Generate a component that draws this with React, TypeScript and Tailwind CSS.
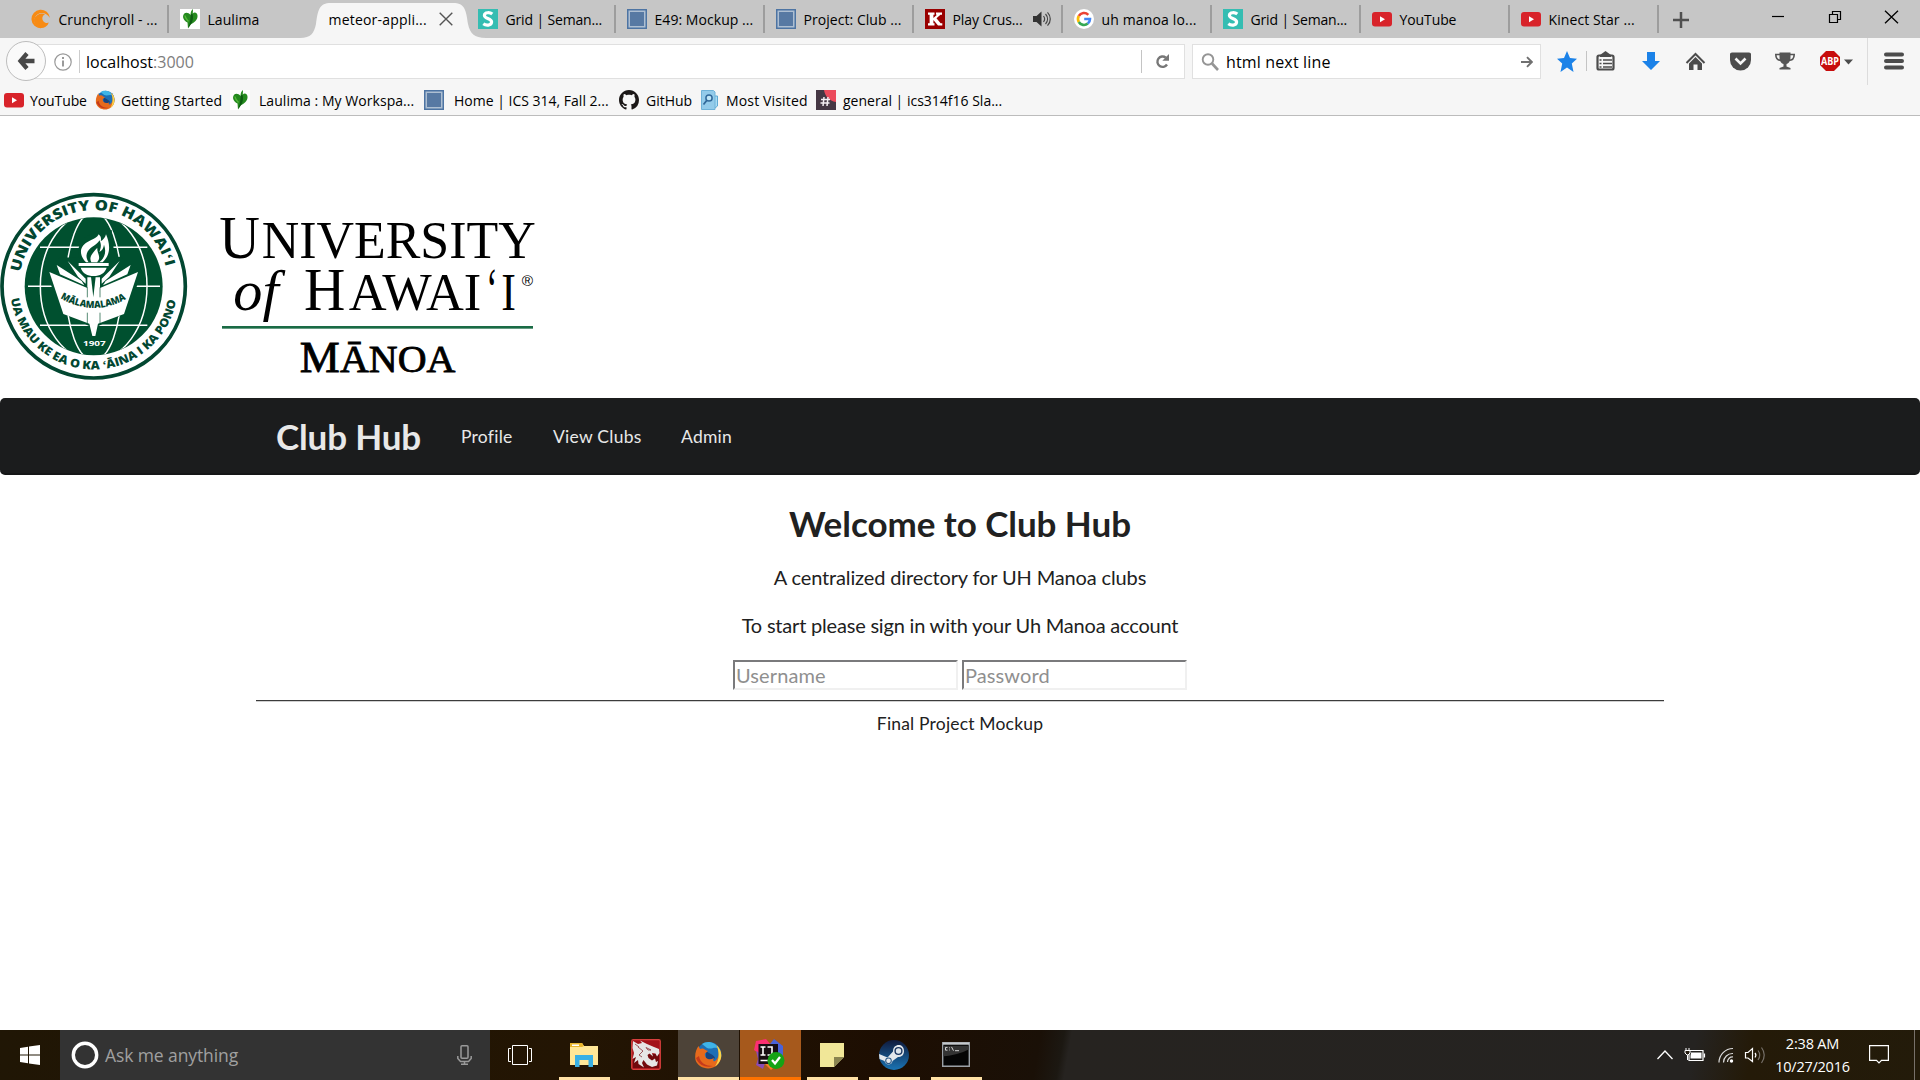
import React from "react";

const UI = "font-['Open_Sans','Noto_Sans',sans-serif]";

function Crunchy() {
  return (
    <svg width="20" height="20" viewBox="0 0 20 20">
      <path d="M19 9A9.300 9.300 0 1 0 10 19.300C4 17 2 12.500 4 8.500C6.500 3 14.500 2 19 9Z" fill="#f78b14" />
      <path d="M14 5.200A7.300 7.300 0 1 0 17.800 13.500A3.900 3.900 0 1 1 14 5.200Z" fill="#f78b14" />
      <path d="M10 19.300C3 17.500 1.500 11 4.500 7.500L8 14Z" fill="#f78b14" />
    </svg>
  );
}
function Leaf() {
  return (
    <svg width="20" height="20" viewBox="0 0 20 20">
      <rect width="20" height="20" fill="#fff" />
      <path d="M10.500 6C8 2.500 3 3 3 8C3.500 11 5.500 12.500 7.500 13.500L8 19.500L10.500 15.500C14 14 18 10.500 17.500 6.500C17 3 14 3 12.800 4.500L13 0C11.500 1 10.500 3 10.500 6Z" fill="#258a1f" />
      <path d="M11 5C10 9 11 12 8 19C12 15 14 10 12.500 5Z" fill="#0d5c12" />
      <path d="M5 6.500C5 9 7 10.500 8.500 12.500" stroke="#55b83a" strokeWidth="1.400" fill="none" />
    </svg>
  );
}
function SemanticIcon() {
  return (
    <svg width="20" height="20" viewBox="0 0 20 20">
      <rect width="20" height="20" fill="#35bdb2" />
      <path d="M14.3 5.1C12 3.2 6.7 3 6.4 6.3C6.2 9.8 13.6 9 13.6 13C13.4 16.8 8 16.8 5.3 14.8" stroke="#fff" strokeWidth="3.2" fill="none" />
    </svg>
  );
}
function BlueSquare() {
  return (
    <svg width="20" height="20" viewBox="0 0 20 20">
      <rect x=".75" y=".75" width="18.5" height="18.5" fill="#aebfd2" stroke="#4d74a3" strokeWidth="1.5" />
      <rect x="3" y="3" width="14" height="14" fill="#5779a3" />
    </svg>
  );
}
function KIcon() {
  return (
    <svg width="20" height="20" viewBox="0 0 20 20">
      <rect width="20" height="20" fill="#990000" />
      <path d="M3 3.5H9.5V5.8H8.4V9L12 5.8H11V3.5H17V5.8H15.4L11.5 9.3L15.6 14.3H17.3V16.6H13L8.4 11V14.3H9.5V16.6H3V14.3H4.6V5.8H3Z" fill="#fff" />
    </svg>
  );
}
function GoogleIcon() {
  return (
    <svg width="20" height="20" viewBox="0 0 20 20">
      <circle cx="10" cy="10" r="10" fill="#fff" />
      <g fill="none" strokeWidth="2.6">
        <path d="M14.3 5.8A6 6 0 0 0 4.8 7" stroke="#ea4335" />
        <path d="M4.8 7A6 6 0 0 0 4.8 13" stroke="#fbbc05" />
        <path d="M4.8 13A6 6 0 0 0 13.8 14.6" stroke="#34a853" />
        <path d="M13.8 14.6A6 6 0 0 0 16 10H10.2" stroke="#4285f4" />
      </g>
    </svg>
  );
}
function YouTubeIcon() {
  return (
    <svg width="20" height="20" viewBox="0 0 20 20">
      <rect y="3" width="20" height="14.6" rx="3" fill="#d8232a" />
      <path d="M8 7.2L13 10.2L8 13.2Z" fill="#fff" />
    </svg>
  );
}
function Firefox({ w, h }: { w: number; h: number }) {
  return (
    <svg width={w} height={h} viewBox="0 0 28 28" preserveAspectRatio="none">
      <circle cx="15" cy="13.5" r="12.5" fill="#1d6fb5" />
      <path d="M8 3C13 -1 22 1 25 8C20 5 18 9 13 7Z" fill="#3fb4e8" />
      <path d="M12 9C14 13 20 13 21 17C19 20 14 20 12 18Z" fill="#17447f" />
      <path d="M22 4C29 9 29 20 22 25C15 30 4 27 1.500 19C.5 13 2 9 4.500 5L6 8C8 7 10 7.500 11.500 9L14 10L11 12.500C10 17 15 20 20 17C17 23 24 20 24.500 14C25 10 24 7 22 4Z" fill="#e66a1c" />
      <path d="M22.500 4C30 11 28 21 21 25.500C25 20 26 12 22.500 4Z" fill="#f9d548" />
      <path d="M2 17C5 25 13 27 19 25C12 25 6 22 5 15Z" fill="#c53a1b" />
    </svg>
  );
}
function GitHubIcon() {
  return (
    <svg width="20" height="20" viewBox="0 0 16 16">
      <path fill="#1b1817" d="M8 0C3.58 0 0 3.58 0 8c0 3.54 2.29 6.53 5.47 7.59.4.07.55-.17.55-.38 0-.19-.01-.82-.01-1.49-2.01.37-2.53-.49-2.69-.94-.09-.23-.48-.94-.82-1.13-.28-.15-.68-.52-.01-.53.63-.01 1.08.58 1.23.82.72 1.21 1.87.87 2.33.66.07-.52.28-.87.51-1.07-1.78-.2-3.64-.89-3.64-3.95 0-.87.31-1.59.82-2.15-.08-.2-.36-1.02.08-2.12 0 0 .67-.21 2.2.82.64-.18 1.32-.27 2-.27s1.36.09 2 .27c1.53-1.04 2.2-.82 2.2-.82.44 1.1.16 1.92.08 2.12.51.56.82 1.27.82 2.15 0 3.07-1.87 3.75-3.65 3.95.29.25.54.73.54 1.48 0 1.07-.01 1.93-.01 2.2 0 .21.15.46.55.38A8.01 8.01 0 0 0 16 8c0-4.42-3.58-8-8-8z" />
    </svg>
  );
}
function VisitedIcon() {
  return (
    <svg width="20" height="20" viewBox="0 0 20 20">
      <path d="M12 6H17.500V16L15 18H12Z" fill="#a9dcf5" stroke="#5fa9d3" />
      <path d="M1.500 .5H13.500L15 2V19.500H1.500Z" fill="#93cbea" stroke="#6fb2d8" />
      <circle cx="9" cy="8" r="3.100" fill="#bfe6f8" stroke="#31699a" strokeWidth="1.500" />
      <path d="M6.700 10.500L3.500 14.500" stroke="#31699a" strokeWidth="1.800" />
    </svg>
  );
}
function SlackIcon() {
  return (
    <svg width="20" height="20" viewBox="0 0 20 20">
      <rect width="20" height="20" fill="#453744" />
      <path d="M8 0H20V12C13 11 9 6 8 0Z" fill="#ec4a5c" />
      <path d="M8 7L7 16M12 7L11 16M5 9.500H14M4.500 13H13.500" stroke="#f4eef2" strokeWidth="1.500" />
    </svg>
  );
}

type TabData = { icon: React.ReactNode; label: string; active?: boolean; sound?: boolean; noSep?: boolean; track: string };

const tabs: TabData[] = [
  { icon: <Crunchy />, label: "Crunchyroll - ...", track: "tracking-[0.05px]" },
  { icon: <Leaf />, label: "Laulima", noSep: true, track: "tracking-[0.05px]" },
  { icon: null, label: "meteor-appli...", active: true, noSep: true, track: "tracking-[0.2px]" },
  { icon: <SemanticIcon />, label: "Grid | Seman...", track: "tracking-[-0.15px]" },
  { icon: <BlueSquare />, label: "E49: Mockup ...", track: "tracking-[0.05px]" },
  { icon: <BlueSquare />, label: "Project: Club ...", track: "tracking-[0.05px]" },
  { icon: <KIcon />, label: "Play Crus...", sound: true, track: "tracking-[-0.1px]" },
  { icon: <GoogleIcon />, label: "uh manoa lo...", track: "tracking-[0.15px]" },
  { icon: <SemanticIcon />, label: "Grid | Seman...", track: "tracking-[-0.15px]" },
  { icon: <YouTubeIcon />, label: "YouTube", track: "tracking-[-0.1px]" },
  { icon: <YouTubeIcon />, label: "Kinect Star ...", track: "tracking-[0.1px]" },
];

function Tab({ t }: { t: TabData }) {
  if (t.active) {
    return (
      <div className="relative flex h-[38px] w-[149px] items-center">
        <svg className="absolute -left-[18px] top-0" width="186" height="38" viewBox="0 0 186 38">
          <path d="M0 38C11 38 14 33 16 24C18 10 19 3 31 3H153C165 3 166 10 168 24C170 33 174 38 186 38Z" fill="#f6f6f6" />
        </svg>
        <span className={"relative ml-[11px] w-[99px] whitespace-nowrap text-[14px] " + t.track}>{t.label}</span>
        <svg className="relative ml-[11px]" width="14" height="14" viewBox="0 0 14 14">
          <path d="M.7.7L13.300 13.300M13.300.7L.7 13.300" stroke="#555" strokeWidth="1.400" />
        </svg>
      </div>
    );
  }
  return (
    <div className="flex h-[38px] w-[149px] shrink-0 items-center">
      <div className="ml-[11px] h-5 w-5">{t.icon}</div>
      <span className={"ml-2 whitespace-nowrap text-[14px] " + t.track}>{t.label}</span>
      <div className="ml-auto flex items-center">
        {t.sound && (
          <svg className="mr-[10px]" width="18" height="16" viewBox="0 0 18 16">
            <path d="M0 5H3.500L8.500 .5V15.500L3.500 11H0Z" fill="#333" />
            <path d="M10.500 5C12 7 12 9 10.500 11M12.500 3C15.200 6 15.200 10 12.500 13M14.500 1.300C18.200 5 18.200 11 14.500 14.700" stroke="#444" strokeWidth="1.200" fill="none" />
          </svg>
        )}
        {!t.noSep && <div className="h-7 w-[1.5px] bg-[#9d9d9d]" />}
      </div>
    </div>
  );
}

function TabStrip() {
  return (
    <div className="flex h-[38px] bg-[#c6c6c6] pl-[19.500px] text-black">
      {tabs.map((t, i) => (
        <Tab key={i} t={t} />
      ))}
      <svg className="ml-[14.500px] mt-3" width="16" height="16" viewBox="0 0 16 16">
        <path d="M8 0V16M0 8H16" stroke="#505050" strokeWidth="2.500" />
      </svg>
      <svg className="ml-[83px] mt-[10px]" width="128" height="14" viewBox="0 0 128 14">
        <path d="M0 6.500H12" stroke="#000" strokeWidth="1.200" />
        <path d="M57.500 4.500H65.500V12.500H57.500ZM60.500 4V1.500H68.500V9.500H66" stroke="#000" strokeWidth="1.200" fill="none" />
        <path d="M113 .7L126 13.300M126 .7L113 13.300" stroke="#000" strokeWidth="1.300" />
      </svg>
    </div>
  );
}

function NavBar() {
  return (
    <div className="relative flex h-[47px] items-center bg-[#f6f6f6]">
      <div className="ml-6 flex h-[35px] w-[1161px] items-center border border-[#e0e0e0] bg-white">
        <svg className="ml-[29px]" width="18" height="18" viewBox="0 0 18 18">
          <circle cx="9" cy="9" r="8.200" fill="none" stroke="#999" strokeWidth="1.200" />
          <path d="M9 7.500V13.500M9 4V6" stroke="#909090" strokeWidth="1.800" />
        </svg>
        <div className="ml-[7px] h-[23px] w-px bg-[#ccc]" />
        <span className="ml-[6px] text-[16px] tracking-[0] text-black">
          localhost<span className="text-[#7d7d7d]">:3000</span>
        </span>
        <div className="ml-auto h-[23px] w-px bg-[#c4c4c4]" />
        <svg className="ml-[13px] mr-[14px]" width="15" height="15" viewBox="0 0 15 15">
          <path d="M10.800 3.600A5.200 5.200 0 1 0 12 10.500" fill="none" stroke="#777" strokeWidth="2.400" />
          <path d="M14 0V6.800H7.300Z" fill="#777" />
        </svg>
      </div>
      <div className="absolute left-[6px] top-[3px] flex h-10 w-10 items-center justify-center rounded-full border border-[#bdbdbd] bg-[#fafafa]">
        <svg width="20" height="20" viewBox="0 0 20 20">
          <path d="M11 2.500L4.500 10L11 17.500M5 10H18.500" fill="none" stroke="#484848" strokeWidth="4.300" />
        </svg>
      </div>
      <div className="ml-[7px] flex h-[35px] w-[349px] items-center border border-[#e0e0e0] bg-white">
        <svg className="ml-2" width="18" height="18" viewBox="0 0 18 18">
          <circle cx="7" cy="6.500" r="5.300" fill="none" stroke="#959595" strokeWidth="1.900" />
          <path d="M11 10.500L17 17" stroke="#959595" strokeWidth="2.600" />
        </svg>
        <span className="ml-[7px] text-[16px] tracking-[0.15px] text-black">html next line</span>
        <svg className="ml-auto mr-[7px]" width="12" height="12" viewBox="0 0 12 12">
          <path d="M0 6H10.500M6 1.200L10.800 6L6 10.800" fill="none" stroke="#707070" strokeWidth="1.900" />
        </svg>
      </div>
      <svg className="ml-[15px]" width="364" height="47" viewBox="1556 38 364 47">
        <path d="M1567 51L1570 58L1577 58.800L1571.800 63.600L1573.500 72L1567 67.600L1560.500 72L1562.200 63.600L1557 58.800L1564 58Z" fill="#1b82e8" />
        <path d="M1586.500 51V71" stroke="#c4c4c4" />
        <rect x="1597.500" y="55.500" width="16" height="14" rx="1.500" fill="#f6f6f6" stroke="#4c4c4c" strokeWidth="2.200" />
        <path d="M1600 55L1605.500 51L1611 55V57H1600Z" fill="#4c4c4c" />
        <path d="M1599.500 60H1601.500M1603 60H1612M1599.500 63.500H1601.500M1603 63.500H1612M1599.500 67H1601.500M1603 67H1612" stroke="#4c4c4c" strokeWidth="1.500" />
        <path d="M1647 52H1655V61H1660L1651 70L1642 61H1647Z" fill="#1b82e8" />
        <path d="M1686.500 63L1695.500 54L1704.500 63" fill="none" stroke="#4c4c4c" strokeWidth="2" />
        <path d="M1689 63.500L1695.500 57L1702 63.500V70H1697.500V64.500H1693.500V70H1689Z" fill="#4c4c4c" />
        <path d="M1730 54Q1730 52.500 1732 52.500H1749Q1751 52.500 1751 54V60A10.500 10.500 0 0 1 1730 60Z" fill="#4c4c4c" />
        <path d="M1735.500 58.500L1740.500 63.500L1745.500 58.500" fill="none" stroke="#f6f6f6" strokeWidth="2.600" />
        <path d="M1779.500 52.500H1790.500V57C1790.500 62 1788 63.500 1786.500 64V66.500L1790.500 68V69.500H1779.500V68L1783.500 66.500V64C1782 63.500 1779.500 62 1779.500 57Z" fill="#555" />
        <path d="M1780 54.500H1775.800C1775.800 58.500 1778 60.500 1781.500 60.500M1790 54.500H1794.200C1794.200 58.500 1792 60.500 1788.500 60.500" fill="none" stroke="#555" strokeWidth="1.600" />
        <path d="M1826 51H1834L1840 57V65L1834 71H1826L1820 65V57Z" fill="#c70d0d" />
        <text x="1821" y="65" fontFamily="Open Sans" fontWeight="700" fontSize="11" textLength="18" lengthAdjust="spacingAndGlyphs" fill="#fff">ABP</text>
        <path d="M1844 59.500H1853L1848.500 64.500Z" fill="#4c4c4c" />
        <path d="M1867.500 38V85" stroke="#dcdcdc" />
        <path d="M1886 54.500H1902M1886 61H1902M1886 67.500H1902" stroke="#4c4c4c" strokeWidth="4" strokeLinecap="round" />
      </svg>
    </div>
  );
}

function Bookmark({ icon, label, box, text }: { icon: React.ReactNode; label: string; box: string; text: string }) {
  return (
    <div className={"flex shrink-0 items-center " + box}>
      <div className="h-5 w-5 shrink-0">{icon}</div>
      <span className={"whitespace-nowrap text-[14px] text-black " + text}>{label}</span>
    </div>
  );
}

function Bookmarks() {
  return (
    <div className="flex h-[31px] items-center border-b border-[#bcbcbc] bg-[#f6f6f6] pl-1">
      <Bookmark icon={<YouTubeIcon />} label="YouTube" box="w-[91px]" text="ml-[6px] tracking-[-0.1px]" />
      <Bookmark icon={<Firefox w={20} h={20} />} label="Getting Started" box="w-[135px]" text="ml-[6px] tracking-[0.15px]" />
      <Bookmark icon={<Leaf />} label="Laulima : My Workspa..." box="w-[194px]" text="ml-[9px] tracking-[0.05px]" />
      <Bookmark icon={<BlueSquare />} label="Home | ICS 314, Fall 2..." box="w-[195px]" text="ml-[10px] tracking-[0]" />
      <Bookmark icon={<GitHubIcon />} label="GitHub" box="w-[81px]" text="ml-[7px] tracking-[0]" />
      <Bookmark icon={<VisitedIcon />} label="Most Visited" box="w-[116px]" text="ml-[6px] tracking-[0.15px]" />
      <Bookmark icon={<SlackIcon />} label="general | ics314f16 Sla..." box="w-[200px]" text="ml-[7px] tracking-[0]" />
    </div>
  );
}

function UniversityLogo() {
  return (
    <svg width="540" height="210" viewBox="0 0 1620 630" className="block">
      <defs>
        <path id="arcTop" d="M61 277A223 223 0 0 1 501 277" />
        <path id="arcBottom" d="M33 356A251 251 0 0 0 529 356" />
        <path id="arcBook" d="M181 354Q282 414 384 354" />
        <clipPath id="globe">
          <circle cx="281" cy="319" r="206" />
        </clipPath>
      </defs>
      <circle cx="281" cy="319" r="275" fill="#fff" stroke="#024731" strokeWidth="11" />
      <circle cx="281" cy="319" r="207" fill="#00502f" />
      <g clipPath="url(#globe)" fill="none" stroke="#fff" strokeWidth="4.500">
        <ellipse cx="281" cy="319" rx="160" ry="222" />
        <ellipse cx="281" cy="319" rx="83" ry="222" />
        <path d="M120 202H442M84 319H480M120 436H442" />
      </g>
      <path d="M281 235L180 232L140 275L180 395L281 445L385 395L425 275L360 230Z" fill="#00502f" />
      <path d="M238 236C225 195 250 170 290 155L335 150L345 245Z" fill="#00502f" />
      <path d="M148 276L262 324V292H300V324L414 276L372 402L294 431L286 468H277L268 431L190 402Z" fill="#fff" />
      <path d="M170 255L245 303L253 316L180 283ZM203 243L257 296V311L234 290ZM392 255L317 303L309 316L382 283ZM359 243L305 296V311L328 290Z" fill="#fff" />
      <path d="M273 290L280 352L287 290Z" fill="#00502f" />
      <path d="M262 322V352M300 322V352M262 398V430M300 398V430" stroke="#00502f" strokeWidth="2" />
      <path d="M236 249H326V258H236ZM242 263H320C314 280 300 288 281 288C262 288 248 280 242 263Z" fill="#fff" />
      <path d="M258 247C232 220 242 194 268 183C284 176 292 172 296 163C304 170 304 177 302 184C310 179 316 173 318 163C330 190 334 222 308 247Z" fill="#fff" />
      <path d="M266 247C254 230 260 214 272 204C286 194 296 188 298 181C306 194 302 206 298 216C306 212 311 204 312 194C320 216 314 234 298 247Z" fill="#00502f" />
      <path d="M274 247C266 232 276 220 292 203C290 220 306 231 291 247Z" fill="#fff" />
      <g fontFamily="Open Sans" fontWeight="800" fill="#024731">
        <text fontSize="43">
          <textPath href="#arcTop" textLength="610" lengthAdjust="spacingAndGlyphs">UNIVERSITY OF HAWAIʻI</textPath>
        </text>
        <text fontSize="35">
          <textPath href="#arcBottom" textLength="705" lengthAdjust="spacingAndGlyphs">UA MAU KE EA O KA ʻĀINA I KA PONO</textPath>
        </text>
        <text fontSize="29">
          <textPath href="#arcBook" textLength="208" lengthAdjust="spacingAndGlyphs">MĀLAMALAMA</textPath>
        </text>
        <text x="249" y="497" fontSize="22" fontWeight="700" fill="#fff" textLength="68" lengthAdjust="spacingAndGlyphs">1907</text>
      </g>
      <g fontFamily="Liberation Serif" fill="#000">
        <text x="658" y="234" fontSize="182" textLength="122" lengthAdjust="spacingAndGlyphs">U</text>
        <text x="785" y="234" fontSize="157" textLength="822" lengthAdjust="spacingAndGlyphs">NIVERSITY</text>
        <text x="700" y="390" fontSize="174" fontStyle="italic" textLength="136" lengthAdjust="spacingAndGlyphs">of</text>
        <text x="912" y="390" fontSize="182" textLength="124" lengthAdjust="spacingAndGlyphs">H</text>
        <text x="1046" y="390" fontSize="157" textLength="398" lengthAdjust="spacingAndGlyphs">AWAI</text>
        <text x="1459" y="390" fontSize="182" textLength="34" lengthAdjust="spacingAndGlyphs">ʻ</text>
        <text x="1504" y="390" fontSize="157" textLength="44" lengthAdjust="spacingAndGlyphs">I</text>
        <text x="1565" y="319" fontFamily="Liberation Sans" fontSize="42" textLength="34" lengthAdjust="spacingAndGlyphs">®</text>
        <g stroke="#000" strokeWidth="2.500">
          <text x="899" y="576" fontSize="130" textLength="120" lengthAdjust="spacingAndGlyphs">M</text>
          <text x="1020" y="576" fontSize="114" textLength="346" lengthAdjust="spacingAndGlyphs">ĀNOA</text>
        </g>
      </g>
      <rect x="666" y="438" width="933" height="8" fill="#1a6b45" />
    </svg>
  );
}

function Page() {
  return (
    <div className="h-[914px] bg-white pt-16 font-['Lato',sans-serif] text-[#212121]">
      <UniversityLogo />
      <nav className="mt-2 flex h-[77px] items-center rounded-[5px] border-b-2 border-[#151617] bg-[#1b1c1d] pl-[276px] pt-[3px] text-[17.5px] tracking-[0.25px] text-[#e8e8e8]">
        <span className="-mt-px w-[185px] whitespace-nowrap text-[35px] font-bold leading-none tracking-[-0.15px]">Club Hub</span>
        <span className="w-[92px]">Profile</span>
        <span className="w-32">View Clubs</span>
        <span>Admin</span>
      </nav>
      <main className="mx-64 flex flex-col items-center">
        <h1 className="mt-[26px] text-[35px] font-bold leading-[45px] tracking-[-0.05px]">Welcome to Club Hub</h1>
        <p className="mt-[17px] text-[20px] leading-[29px] tracking-[-0.14px]">A centralized directory for UH Manoa clubs</p>
        <p className="mt-[19px] text-[20px] leading-[29px] tracking-[-0.2px]">To start please sign in with your Uh Manoa account</p>
        <div className="mt-[20px] flex gap-1">
          <input
            placeholder="Username"
            className="h-[30px] w-[225px] border-2 border-b-[#f0f0f0] border-l-[#7a7a7c] border-r-[#f0f0f0] border-t-[#7a7a7c] px-[1px] text-[20px] tracking-[0.1px] placeholder:text-[#8f8f8f]"
          />
          <input
            placeholder="Password"
            className="h-[30px] w-[225px] border-2 border-b-[#f0f0f0] border-l-[#7a7a7c] border-r-[#f0f0f0] border-t-[#7a7a7c] px-[1px] text-[20px] tracking-[0.1px] placeholder:text-[#8f8f8f]"
          />
        </div>
        <div className="mt-[10px] h-[2px] w-full border-b border-t border-b-[#d0d0d0] border-t-[#3c3c3c]" />
        <p className="mt-[9px] text-[17.5px] leading-[26px] tracking-[0.18px]">Final Project Mockup</p>
      </main>
    </div>
  );
}

function TaskItem({ children, box, line }: { children?: React.ReactNode; box: string; line: string }) {
  return (
    <div className={"flex h-[50px] shrink-0 flex-col items-center " + box}>
      <div className="flex h-[47px] items-center justify-center pr-[2px] pt-[2px]">{children}</div>
      <div className={"h-[3px] w-full " + line} />
    </div>
  );
}

function Taskbar() {
  return (
    <div className="flex h-[50px] bg-[linear-gradient(100deg,#201605_0%,#231503_30%,#1d0e02_46%,#1a1007_54%,#1c1812_55.2%,#262320_55.6%,#252321_88%,#241a08_91%,#231b0a_100%)]">
      <div className="flex w-[60px] items-center justify-center">
        <svg width="20" height="20" viewBox="0 0 20 20">
          <path d="M0 2.900L8 1.700V9.500H0ZM9 1.500L20 0V9.500H9ZM0 10.500H8V18.300L0 17.100ZM9 10.500H20V20L9 18.500Z" fill="#fff" />
        </svg>
      </div>
      <div className="flex w-[430px] items-center bg-[#333333] pl-[11px]">
        <svg width="28" height="28" viewBox="0 0 28 28">
          <circle cx="14" cy="14" r="11.700" fill="none" stroke="#fff" strokeWidth="3.400" />
        </svg>
        <span className="ml-[6px] text-[17.500px] tracking-[-0.1px] text-[#a0a0a0]">Ask me anything</span>
        <svg className="ml-auto mr-[18px]" width="15" height="20" viewBox="0 0 15 20">
          <rect x="4" y=".8" width="7" height="12.500" rx="1" fill="none" stroke="#9a9a9a" strokeWidth="1.500" />
          <path d="M.8 11V13.500L3.500 16.500H11.500L14.200 13.500V11M7.500 16.500V19M4 19.200H11" fill="none" stroke="#9a9a9a" strokeWidth="1.500" />
        </svg>
      </div>
      <svg className="ml-[18px] mt-[15px]" width="24" height="20" viewBox="0 0 24 20">
        <path d="M4.500 .5H19.500V19.500H4.500ZM3 3.500H.5V16.500H3M21 3.500H23.500V16.500H21" fill="none" stroke="#fff" />
      </svg>
      <TaskItem box="ml-[27px] w-[51px]" line="bg-[#ffe1a5]">
        <svg width="28" height="24" viewBox="0 0 28 24">
          <path d="M0 0H12L14 3H28V22H0Z" fill="#ffe797" />
          <path d="M0 0H12L14 3L12 4H0Z" fill="#e8b52c" />
          <path d="M2 1.500H9V3H2Z" fill="#fff" />
          <path d="M5 12H23V24H18.500V17H9.500V24H5Z" fill="#38b0e5" />
        </svg>
      </TaskItem>
      <TaskItem box="ml-[21px] w-[32px]" line="">
        <svg width="30" height="31" viewBox="0 0 30 31">
          <rect x=".7" y=".7" width="28.600" height="29.600" rx="1.500" fill="#a3121a" stroke="#d8403e" strokeWidth="1.200" />
          <path d="M2 15H28V29H2Z" fill="#5c0508" opacity=".7" />
          <path d="M2 2L7 5L11 4L9 1.500L16 5L23 8L28 10L28.500 14L26 17.500L24.500 14.500L21 14L22 17.500L18.500 14.500L16.500 16L17.500 19L21 21.500L24 19.500L25 23L27 22L26 26.500L21 28L16 25.500L12.500 21L11 24L13 28.500L7.500 25L7 21L3 24L5 18L1.500 20L3 14L1.500 9Z" fill="#e6e6e6" />
          <path d="M15 8.500L20 11L17 11ZM7 8L12 12L8 16L11 18M4 5L8 8" stroke="#8a3238" fill="none" strokeWidth=".8" />
        </svg>
      </TaskItem>
      <TaskItem box="ml-[15px] w-[61px] bg-[#4d4338]" line="bg-[#ffe1a5]">
        <Firefox w={28} h={28} />
      </TaskItem>
      <TaskItem box="ml-px w-[61px] bg-[#a6591c]" line="bg-[#ff7200]">
        <svg width="31" height="31" viewBox="0 0 31 31">
          <path d="M2 2L12 0L17 6L10 18L0 11Z" fill="#fc2f72" />
          <path d="M16 5L20 0L29 7V21L20 16Z" fill="#4a63d8" />
          <path d="M2 12L13 18L9 30L2 26L4 20Z" fill="#8a4bb5" />
          <path d="M10 24H25L17 31Z" fill="#f67a24" />
          <rect x="4.500" y="5" width="19.500" height="20" fill="#170e12" />
          <path d="M6.500 8H11.500M9 8V16M6.500 16H11.500M13.500 8H18V13.500Q18 16 16 16H13.500M6.500 21.500H14" stroke="#fff" strokeWidth="1.600" fill="none" />
          <circle cx="22" cy="21.500" r="8.500" fill="#15a315" />
          <path d="M18 21L21 24.500L26 18" stroke="#fff" strokeWidth="2.300" fill="none" />
        </svg>
      </TaskItem>
      <TaskItem box="ml-[6px] w-[51px]" line="bg-[#ffe1a5]">
        <svg width="24" height="24" viewBox="0 0 24 24">
          <path d="M0 0H24V14L14 24H0Z" fill="#f1e798" />
          <path d="M14 14H24L14 24Z" fill="#8a8450" />
        </svg>
      </TaskItem>
      <TaskItem box="ml-[11px] w-[51px]" line="bg-[#ffe1a5]">
        <svg width="30" height="30" viewBox="0 0 30 30">
          <defs>
            <linearGradient id="steam" x1="0" y1="0" x2="0" y2="1">
              <stop offset="0" stopColor="#101a3c" />
              <stop offset="1" stopColor="#1a74b4" />
            </linearGradient>
          </defs>
          <circle cx="15" cy="15" r="15" fill="url(#steam)" />
          <path d="M0 14L8.500 17.500L14 11.500C14 3 25 3 25 11C25 15.500 22 17 19 17L13.500 21C13 25.500 6.500 26 5.500 21L.5 19Z" fill="#e4e8ec" />
          <circle cx="19.500" cy="11" r="3.400" fill="#dfe6ec" stroke="#1a3560" strokeWidth="1.400" />
          <circle cx="9.500" cy="20.800" r="2.800" fill="none" stroke="#2c5a88" strokeWidth="1.100" />
        </svg>
      </TaskItem>
      <TaskItem box="ml-[11px] w-[51px]" line="bg-[#ffe1a5]">
        <svg width="28" height="25" viewBox="0 0 28 23" preserveAspectRatio="none">
          <rect x=".7" y=".7" width="26.600" height="21.600" fill="#050505" stroke="#9aa0a6" strokeWidth="1.400" />
          <path d="M1 1.500H27" stroke="#c5c9cd" strokeWidth="2" />
          <path d="M1.500 13C10 13 20 10 26.500 7V3.500H1.500Z" fill="#333" />
          <path d="M5.500 5H3.500V7.500H5.500M7.500 5V5.800M7.500 7V7.700M9.500 4.500L11.500 8M13 8H17" stroke="#ddd" strokeWidth=".9" fill="none" />
        </svg>
      </TaskItem>
      <svg className="ml-auto mt-[14px]" width="114" height="24" viewBox="1656 1044 114 24">
        <path d="M1657.500 1059L1665 1051L1672.500 1059" fill="none" stroke="#fff" strokeWidth="1.300" />
        <path d="M1689 1050.500H1703V1060.500H1689ZM1704.500 1053.500V1057.500" fill="none" stroke="#fff" strokeWidth="1.200" />
        <path d="M1691 1052.500H1701.500V1058.500H1690.500V1056Z" fill="#fff" />
        <path d="M1686 1048V1050M1689 1048V1050M1685 1050.500H1690V1053L1688 1055H1687L1685 1053ZM1687.500 1055V1060" stroke="#fff" fill="#231b10" />
        <circle cx="1731.500" cy="1061" r="1.700" fill="#fff" />
        <path d="M1727.500 1062A5 5 0 0 1 1733 1057M1723.500 1062.500A9 9 0 0 1 1733 1053.500M1719 1062.500A14 14 0 0 1 1733 1048.500" fill="none" stroke="#ddd" strokeWidth="1.200" />
        <path d="M1745.500 1052.500H1748L1752.500 1048.500V1061.500L1748 1058H1745.500Z" fill="none" stroke="#fff" strokeWidth="1.200" />
        <path d="M1755 1053Q1756.800 1055 1755 1057.500" fill="none" stroke="#fff" strokeWidth="1.200" />
        <path d="M1758 1050.500Q1761.500 1055 1758 1060M1761.500 1047.500Q1767 1055 1761.500 1063" fill="none" stroke="#77716a" strokeWidth="1.200" />
      </svg>
      <div className="ml-[4px] flex w-[77px] flex-col items-center pt-[2px] text-[14.500px] leading-[23px] text-white">
        <span className="whitespace-nowrap tracking-[-0.2px]">2:38 AM</span>
        <span className="whitespace-nowrap tracking-[-0.25px]">10/27/2016</span>
      </div>
      <svg className="ml-[18px] mt-[14px]" width="20" height="21" viewBox="0 0 20 21">
        <path d="M.6 1.600H19.400V16.400H12.500L10 19L7.500 16.400H.6Z" fill="none" stroke="#fff" strokeWidth="1.200" />
      </svg>
      <div className="ml-[25px] mr-[5px] w-px bg-[#77716a]" />
    </div>
  );
}

export default function App() {
  return (
    <div className={"h-[1080px] w-[1920px] overflow-hidden bg-white " + UI}>
      <TabStrip />
      <NavBar />
      <Bookmarks />
      <Page />
      <Taskbar />
    </div>
  );
}
